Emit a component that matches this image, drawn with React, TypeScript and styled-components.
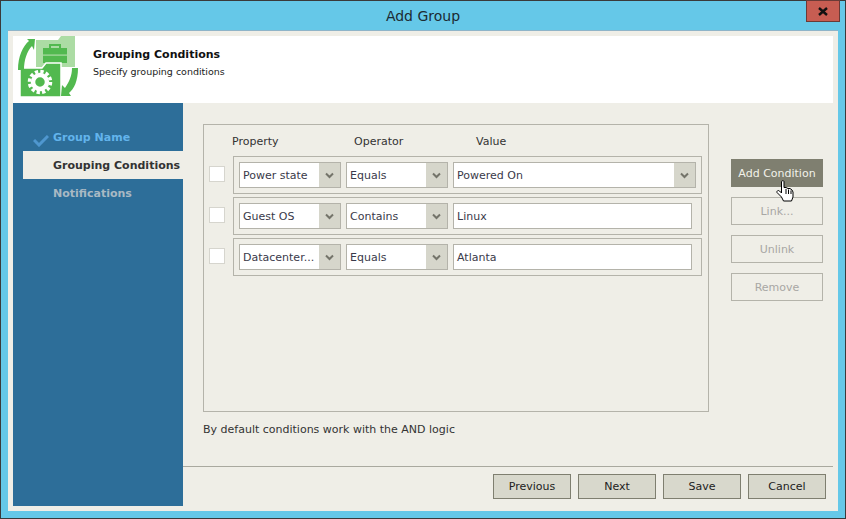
import React from "react";
import styled, { createGlobalStyle } from "styled-components";

const GlobalStyle = createGlobalStyle`
  html, body {
    margin: 0;
    padding: 0;
    background: #65c8e8;
  }
  body {
    font-family: "DejaVu Sans", "Noto Sans", sans-serif;
    font-size: 11px;
    color: #2f2f2f;
  }
`;

const Window = styled.div`
  box-sizing: border-box;
  position: relative;
  width: 846px;
  height: 519px;
  display: flex;
  flex-direction: column;
  background: #65c8e8;
  border: 1px solid #3a3a3a;
`;

const TitleBar = styled.div`
  height: 29px;
  flex: none;
  display: flex;
  align-items: center;
  justify-content: center;
  padding: 1px 0 0 0;
  box-sizing: border-box;
  font-size: 14px;
  color: #1c2b33;
`;

const CloseButton = styled.div`
  position: absolute;
  top: -1px;
  right: 5px;
  width: 34px;
  height: 22px;
  box-sizing: border-box;
  display: flex;
  align-items: center;
  justify-content: center;
  background: #c75d52;
  border: 1px solid #6b3a36;
`;

const Body = styled.div`
  flex: 1;
  margin: 0 7px 7px;
  padding: 5px;
  display: flex;
  flex-direction: column;
  background: #efeee7;
  border-top: 1px solid #8fb4c8;
  min-height: 0;
`;

const Header = styled.div`
  height: 67px;
  flex: none;
  display: flex;
  background: #fff;
  padding-left: 5px;
`;

const HeaderText = styled.div`
  margin-left: 13px;
  padding-top: 11px;
`;

const HeaderTitle = styled.div`
  font-weight: bold;
  font-size: 11px;
  line-height: 16px;
  color: #111;
`;

const HeaderSub = styled.div`
  margin-top: 2px;
  font-size: 9.5px;
  line-height: 14px;
  color: #222;
`;

const Columns = styled.div`
  flex: 1;
  display: flex;
  min-height: 0;
`;

const Sidebar = styled.div`
  width: 170px;
  flex: none;
  box-sizing: border-box;
  padding: 20px 0 0 10px;
  background: #2d6e99;
`;

const StepItem = styled.div<{ $state: "done" | "active" | "todo" }>`
  position: relative;
  height: 28px;
  display: flex;
  align-items: center;
  padding-left: 30px;
  font-weight: bold;
  font-size: 11px;
  white-space: nowrap;
  background: ${(p) => (p.$state === "active" ? "#efeee7" : "transparent")};
  color: ${(p) =>
    p.$state === "active" ? "#333" : p.$state === "done" ? "#63b4ec" : "#a9b9c4"};
`;

const StepCheck = styled.svg`
  position: absolute;
  left: 10px;
  top: 12px;
`;

const Main = styled.div`
  flex: 1;
  display: flex;
  flex-direction: column;
  min-width: 0;
`;

const Content = styled.div`
  flex: 1;
  display: flex;
  padding: 21px 10px 0 20px;
`;

const LeftPane = styled.div`
  width: 506px;
  flex: none;
`;

const Panel = styled.div`
  box-sizing: border-box;
  height: 288px;
  border: 1px solid #b4b3aa;
  padding: 0 6px 0 5px;
`;

const ColumnHeads = styled.div`
  box-sizing: border-box;
  height: 31px;
  display: flex;
  align-items: center;
  padding: 1px 0 0 23px;
  color: #333;
`;

const ColumnHead = styled.div<{ $width: number }>`
  width: ${(p) => p.$width}px;
  font-size: 11px;
`;

const ConditionList = styled.div`
  display: flex;
  flex-direction: column;
  gap: 3px;
`;

const ConditionLine = styled.div`
  display: flex;
  align-items: center;
`;

const CheckBox = styled.div`
  box-sizing: border-box;
  width: 16px;
  height: 16px;
  flex: none;
  margin-right: 8px;
  margin-top: -3px;
  background: #fff;
  border: 1px solid #d6d5ce;
`;

const ConditionBox = styled.div`
  box-sizing: border-box;
  width: 469px;
  height: 38px;
  display: flex;
  align-items: center;
  gap: 5px;
  padding-left: 5px;
  border: 1px solid #b4b3aa;
`;

const Select = styled.div<{ $width: number }>`
  box-sizing: border-box;
  width: ${(p) => p.$width}px;
  height: 26px;
  display: flex;
  align-items: center;
  background: #fff;
  border: 1px solid #b4b3aa;
`;

const FieldText = styled.div`
  flex: 1;
  min-width: 0;
  padding-left: 3px;
  font-size: 11px;
  color: #3a3a4a;
  white-space: nowrap;
  overflow: hidden;
`;

const Arrow = styled.div`
  width: 21px;
  height: 100%;
  flex: none;
  display: flex;
  align-items: center;
  justify-content: center;
  background: #d6d6cb;
`;

const TextInput = styled.div`
  box-sizing: border-box;
  width: 239px;
  height: 26px;
  display: flex;
  align-items: center;
  background: #fff;
  border: 1px solid #b4b3aa;
`;

const Note = styled.div`
  margin-top: 11px;
  line-height: 14px;
  font-size: 11px;
  color: #333;
`;

const SideButtons = styled.div`
  position: relative;
  margin: 35px 0 0 22px;
  display: flex;
  flex-direction: column;
  gap: 10px;
`;

const SideButton = styled.div<{ $hover?: boolean }>`
  box-sizing: border-box;
  width: 92px;
  height: 28px;
  display: flex;
  align-items: center;
  justify-content: center;
  font-size: 11px;
  border: 1px solid ${(p) => (p.$hover ? "#7f7f70" : "#b4b3aa")};
  background: ${(p) => (p.$hover ? "#7f7f70" : "transparent")};
  color: ${(p) => (p.$hover ? "#f2f2ea" : "#a8a7a4")};
`;

const HandCursor = styled.svg`
  position: absolute;
  left: 45px;
  top: 21px;
`;

const Footer = styled.div`
  flex: none;
  height: 40px;
  box-sizing: border-box;
  border-top: 1px solid #a9a99f;
  display: flex;
  justify-content: flex-end;
  gap: 7px;
  padding: 7px 7px 0 0;
`;

const FooterButton = styled.div`
  box-sizing: border-box;
  width: 78px;
  height: 25px;
  display: flex;
  align-items: center;
  justify-content: center;
  font-size: 11px;
  color: #222;
  background: #d8d8cc;
  border: 1px solid #7f7f70;
`;

const Chevron = () => (
  <svg width="9" height="7" viewBox="0 0 9 7">
    <path d="M1 1.5 L4.5 5 L8 1.5" fill="none" stroke="#74746a" strokeWidth="2" />
  </svg>
);

const GroupIcon = () => (
  <svg width="62" height="62" viewBox="0 0 62 62">
    {/* back folder with briefcase */}
    <path d="M18 4 H40 L43 0 H57 V31 H18 Z" fill="#acdca4" />
    <rect x="25" y="12" width="24" height="15" fill="#52b94f" />
    <rect x="25" y="18.5" width="24" height="1.2" fill="#acdca4" />
    <path d="M32 12 V9 H42 V12" fill="none" stroke="#52b94f" strokeWidth="2" />
    {/* front folder with gear */}
    <path
      d="M2 32 H24 L28 27 H43 V61 H2 Z"
      fill="#52b94f"
      stroke="#fff"
      strokeWidth="1.5"
    />
    <circle cx="22" cy="46" r="7" fill="none" stroke="#fff" strokeWidth="4.5" />
    <circle cx="22" cy="46" r="10.5" fill="none" stroke="#fff" strokeWidth="3.5" strokeDasharray="3.3 2.2" />
    {/* cycle arrows */}
    <path d="M0 34 C0 20 5 10 11 5 L9 3 L17 3 L16 14 L14 10 C9 15 6 24 6 34 Z" fill="#52b94f" />
    <path d="M60 32 C60 45 56 53 51 57 L53 60 L43 60 L44 49 L47 52 C51 46 54 40 54 32 Z" fill="#52b94f" />
  </svg>
);

const rows = [
  { property: "Power state", operator: "Equals", value: "Powered On", list: true },
  { property: "Guest OS", operator: "Contains", value: "Linux", list: false },
  { property: "Datacenter...", operator: "Equals", value: "Atlanta", list: false },
];

const App = () => (
  <>
    <GlobalStyle />
    <Window>
      <TitleBar>Add Group</TitleBar>
      <CloseButton>
        <svg width="10" height="9" viewBox="0 0 10 9">
          <path d="M1 1 L9 8 M9 1 L1 8" stroke="#111" strokeWidth="2.4" />
        </svg>
      </CloseButton>
      <Body>
        <Header>
          <GroupIcon />
          <HeaderText>
            <HeaderTitle>Grouping Conditions</HeaderTitle>
            <HeaderSub>Specify grouping conditions</HeaderSub>
          </HeaderText>
        </Header>
        <Columns>
          <Sidebar>
            <StepItem $state="done">
              <StepCheck width="16" height="12" viewBox="0 0 16 12">
                <path d="M1 5 L6 10 L15 1" fill="none" stroke="#4f97cf" strokeWidth="3" />
              </StepCheck>
              Group Name
            </StepItem>
            <StepItem $state="active">Grouping Conditions</StepItem>
            <StepItem $state="todo">Notifications</StepItem>
          </Sidebar>
          <Main>
            <Content>
              <LeftPane>
                <Panel>
                  <ColumnHeads>
                    <ColumnHead $width={122}>Property</ColumnHead>
                    <ColumnHead $width={122}>Operator</ColumnHead>
                    <ColumnHead $width={100}>Value</ColumnHead>
                  </ColumnHeads>
                  <ConditionList>
                    {rows.map((row) => (
                      <ConditionLine key={row.property}>
                        <CheckBox />
                        <ConditionBox>
                          <Select $width={102}>
                            <FieldText>{row.property}</FieldText>
                            <Arrow>
                              <Chevron />
                            </Arrow>
                          </Select>
                          <Select $width={102}>
                            <FieldText>{row.operator}</FieldText>
                            <Arrow>
                              <Chevron />
                            </Arrow>
                          </Select>
                          {row.list ? (
                            <Select $width={243}>
                              <FieldText>{row.value}</FieldText>
                              <Arrow>
                                <Chevron />
                              </Arrow>
                            </Select>
                          ) : (
                            <TextInput>
                              <FieldText>{row.value}</FieldText>
                            </TextInput>
                          )}
                        </ConditionBox>
                      </ConditionLine>
                    ))}
                  </ConditionList>
                </Panel>
                <Note>By default conditions work with the AND logic</Note>
              </LeftPane>
              <SideButtons>
                <SideButton $hover>Add Condition</SideButton>
                <SideButton>Link...</SideButton>
                <SideButton>Unlink</SideButton>
                <SideButton>Remove</SideButton>
                <HandCursor width="18" height="22" viewBox="0 0 18 22">
                  <path
                    d="M5.5 1.5 C5.5 0.5 8 0.5 8 1.5 V7.5 L10 7.5 L12 8.5 L14 8.5 L16 10 L17 12 V17 L15.5 21 H7.5 L5.5 17 L1 12.5 C0.5 10.5 2.5 10 3.5 11 L5.5 13 Z"
                    fill="#fff"
                    stroke="#000"
                    strokeWidth="1"
                  />
                  <path d="M10 9 V14 M12.5 9.5 V14 M15 10.5 V14" stroke="#000" strokeWidth="1" />
                </HandCursor>
              </SideButtons>
            </Content>
            <Footer>
              <FooterButton>Previous</FooterButton>
              <FooterButton>Next</FooterButton>
              <FooterButton>Save</FooterButton>
              <FooterButton>Cancel</FooterButton>
            </Footer>
          </Main>
        </Columns>
      </Body>
    </Window>
  </>
);

export default App;
